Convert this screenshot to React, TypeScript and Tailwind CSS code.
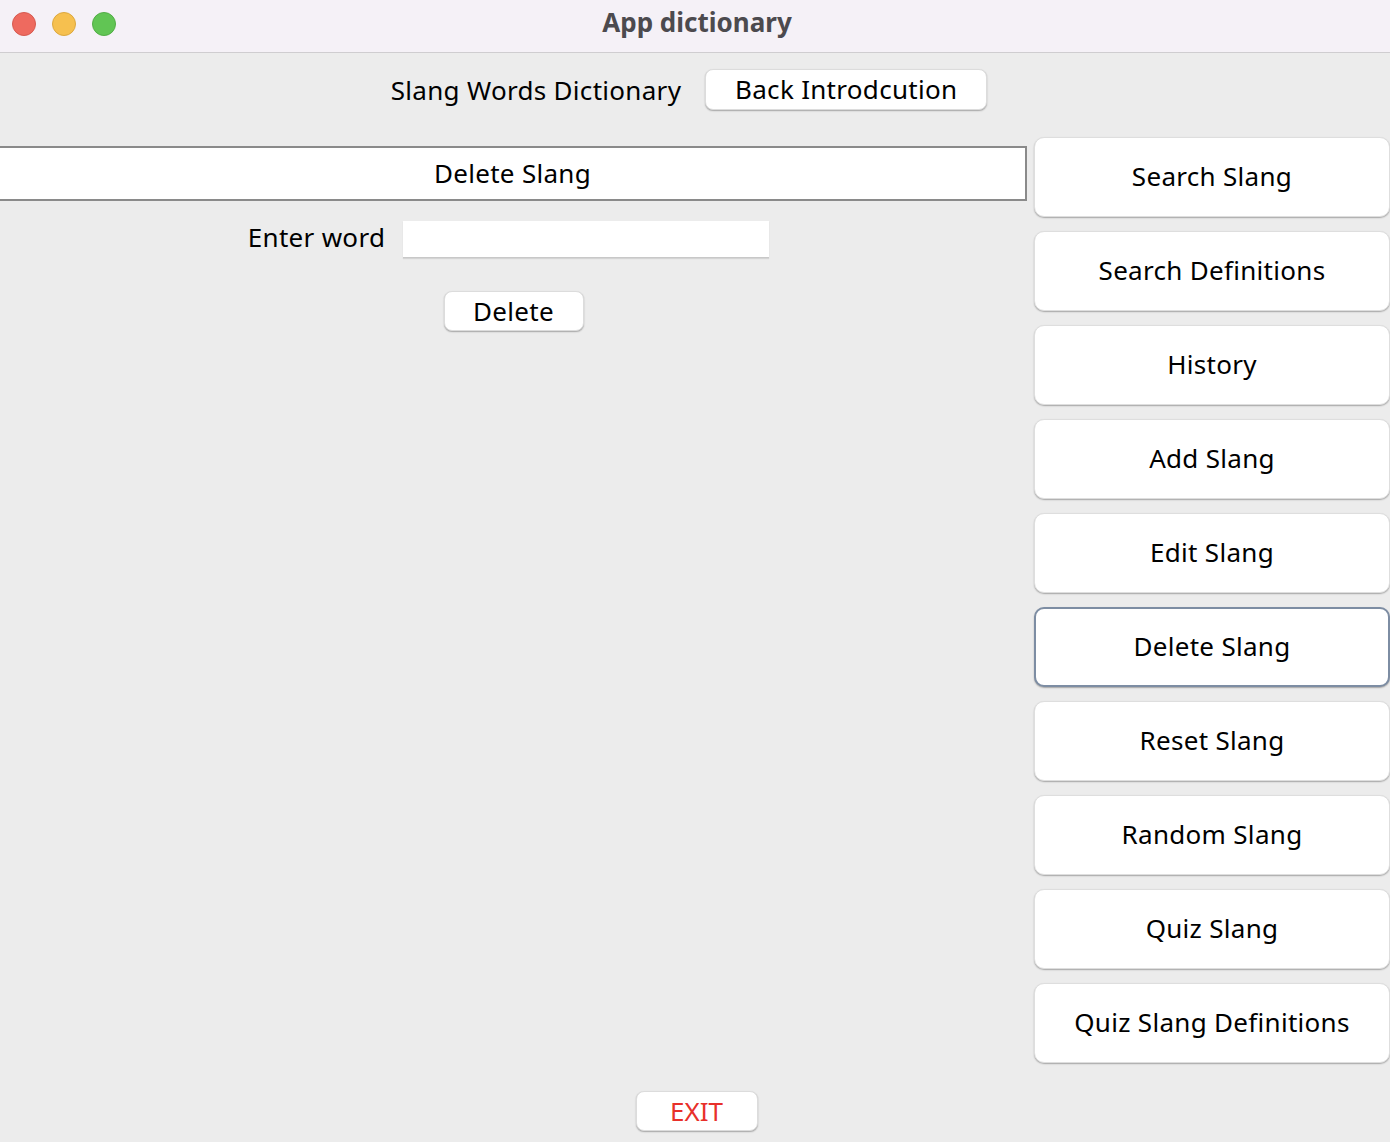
const menu = [
  "Search Slang",
  "Search Definitions",
  "History",
  "Add Slang",
  "Edit Slang",
  "Delete Slang",
  "Reset Slang",
  "Random Slang",
  "Quiz Slang",
  "Quiz Slang Definitions",
];

const font = "font-['Lucida_Grande','Noto_Sans','DejaVu_Sans',sans-serif]";

export default function App() {
  return (
    <div className={`w-[1390px] h-[1142px] overflow-hidden bg-[#ececec] text-black ${font}`}>
      {/* title bar */}
      <div className="relative h-[53px] bg-[#f5f1f7] border-b border-[#cfcdd0] flex items-center justify-center">
        <div className="absolute left-[12px] top-[12px] flex gap-[16px]">
          <span className="w-[24px] h-[24px] rounded-full bg-[#ee6a5f] border border-[#d65a50]" />
          <span className="w-[24px] h-[24px] rounded-full bg-[#f6c04f] border border-[#dca83f]" />
          <span className="w-[24px] h-[24px] rounded-full bg-[#61c554] border border-[#52ad46]" />
        </div>
        <h1 className="text-[26px] font-bold text-[#4c4a4e] -mt-[8px] ml-[4px]">App dictionary</h1>
      </div>

      {/* header row */}
      <div className="h-[84px] flex justify-center items-start gap-[24px] pt-[16px] pr-[12px] text-[26px] tracking-[0.3px]">
        <span className="mt-[5px] leading-[32px]">Slang Words Dictionary</span>
        <button className="h-[41px] w-[282px] pb-[4px] bg-white rounded-[8px] shadow-[0_1px_1.5px_rgba(0,0,0,0.3)] border border-[#dcdcdc]">
          Back Introdcution
        </button>
      </div>

      <div className="flex items-start gap-[7px] text-[26px] tracking-[0.3px]">
        {/* left panel */}
        <div className="flex-1 pt-[9px] flex flex-col items-center">
          <div className="w-full h-[55px] bg-white border-2 border-l-0 border-[#8a8a8a] flex items-center justify-center">
            Delete Slang
          </div>
          <div className="mt-[17px] flex items-center gap-[18px] -ml-[10px]">
            <span className="pb-[4px]">Enter word</span>
            <input className="w-[366px] h-[37px] bg-white border-b border-[#c8c8c8] shadow-[0_1px_1px_rgba(0,0,0,0.1)] outline-none px-2" />
          </div>
          <button className="mt-[30px] w-[140px] h-[40px] pb-[6px] bg-white rounded-[8px] shadow-[0_1px_1.5px_rgba(0,0,0,0.3)] border border-[#dcdcdc]">
            Delete
          </button>
        </div>

        {/* right menu */}
        <div className="w-[356px] flex flex-col gap-[14px]">
          {menu.map((m) => (
            <button
              key={m}
              className={`h-[80px] w-[356px] pb-[2px] bg-white rounded-[10px] shadow-[0_1px_1.5px_rgba(0,0,0,0.3)] ${
                m === "Delete Slang" ? "border-2 border-[#7d8da3]" : "border border-[#dedede]"
              }`}
            >
              {m}
            </button>
          ))}
        </div>
      </div>

      <div className="flex justify-center mt-[28px]">
        <button className="w-[122px] h-[40px] pb-[4px] ml-[3px] bg-white rounded-[8px] text-[26px] text-[#e8302a] shadow-[0_1px_1.5px_rgba(0,0,0,0.3)] border border-[#dcdcdc]">
          EXIT
        </button>
      </div>
    </div>
  );
}
